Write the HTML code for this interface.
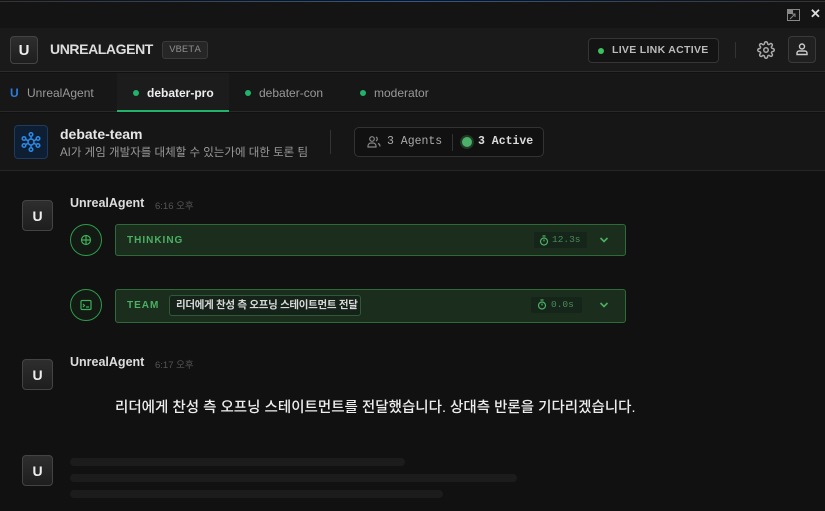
<!DOCTYPE html>
<html><head><meta charset="utf-8"><style>
*{box-sizing:border-box;margin:0;padding:0}
body{width:825px;height:511px;overflow:hidden;background:#111;font-family:"Liberation Sans","Noto Sans CJK KR",sans-serif;position:relative;color:#ddd}
.a{position:absolute;white-space:nowrap}
.mono{font-family:"Liberation Mono","Noto Sans CJK KR",monospace}
.av{position:absolute;width:31px;height:31px;border:1px solid #444;border-radius:4px;background:linear-gradient(#2e2e2e,#1e1e1e);color:#eee;font-weight:bold;font-size:14px;display:flex;align-items:center;justify-content:center}
.dot{position:absolute;width:6px;height:6px;border-radius:50%;background:#22b36a}
.gbox{position:absolute;left:115px;width:511px;background:#1b2e1d;border:1px solid #2f6b38;border-radius:3px}
.circ{position:absolute;width:32px;height:32px;border:1.5px solid #2f9a4a;border-radius:50%;background:#121a13;display:flex;align-items:center;justify-content:center}
</style></head><body>
<div class="a" style="left:0;top:0;width:825px;height:28px;background:#141414"></div>
<div class="a" style="left:0;top:1px;width:825px;height:1px;background:linear-gradient(90deg,#333,#2a5a9a 50%,#333)"></div>
<svg class="a" style="left:787px;top:9px" width="13" height="12"><rect x="0.5" y="0.5" width="12" height="11" fill="none" stroke="#888"/><rect x="1" y="1" width="5" height="4" fill="#888"/><path d="M3 10 L8 5 M5 5h3v3" stroke="#888" fill="none"/></svg>
<div class="a" style="left:810px;top:6px;font-size:13px;color:#ddd;font-weight:bold">✕</div>

<div class="a" style="left:0;top:28px;width:825px;height:44px;background:#1a1a1a;border-bottom:1px solid #2c2c2c"></div>
<div class="av" style="left:10px;top:36px;width:28px;height:28px;font-size:15px">U</div>
<div class="a" style="left:50px;top:41px;font-size:14px;font-weight:bold;color:#ddd;letter-spacing:-0.4px">UNREALAGENT</div>
<div class="a mono" style="left:162px;top:41px;width:46px;height:18px;border:1px solid #3a3a3a;background:#262626;border-radius:3px;font-size:10.5px;color:#888;text-align:center;line-height:16px">VBETA</div>
<div class="a" style="left:588px;top:38px;width:131px;height:25px;border:1px solid #353535;background:#141414;border-radius:4px"></div>
<div class="dot" style="left:598px;top:48px;background:#3cc060"></div>
<div class="a" style="left:612px;top:44px;font-size:10.5px;font-weight:bold;color:#bbb;letter-spacing:.3px">LIVE LINK ACTIVE</div>
<div class="a" style="left:735px;top:42px;width:1px;height:16px;background:#333"></div>
<svg class="a" style="left:757px;top:41px" width="18" height="18" viewBox="0 0 24 24" fill="none" stroke="#aaa" stroke-width="2"><circle cx="12" cy="12" r="3"/><path d="M19.4 15a1.7 1.7 0 0 0 .3 1.8l.1.1a2 2 0 1 1-2.8 2.8l-.1-.1a1.7 1.7 0 0 0-1.8-.3 1.7 1.7 0 0 0-1 1.5V21a2 2 0 1 1-4 0v-.1a1.7 1.7 0 0 0-1.1-1.5 1.7 1.7 0 0 0-1.800.3l-.1.1a2 2 0 1 1-2.8-2.8l.1-.1a1.7 1.7 0 0 0 .3-1.8 1.7 1.7 0 0 0-1.5-1H3a2 2 0 1 1 0-4h.1a1.7 1.7 0 0 0 1.5-1.1 1.7 1.7 0 0 0-.3-1.8l-.1-.1a2 2 0 1 1 2.8-2.8l.1.1a1.7 1.7 0 0 0 1.8.3H9a1.7 1.7 0 0 0 1-1.5V3a2 2 0 1 1 4 0v.1a1.7 1.7 0 0 0 1 1.5 1.7 1.7 0 0 0 1.8-.3l.1-.1a2 2 0 1 1 2.8 2.8l-.1.1a1.7 1.7 0 0 0-.3 1.8V9a1.7 1.7 0 0 0 1.5 1H21a2 2 0 1 1 0 4h-.1a1.7 1.7 0 0 0-1.5 1z"/></svg>
<div class="a" style="left:788px;top:36px;width:28px;height:27px;border:1px solid #3a3a3a;border-radius:4px;background:#202020"></div>
<svg class="a" style="left:795px;top:42px" width="14" height="14" viewBox="0 0 14 14" fill="none" stroke="#ccc" stroke-width="1.4"><circle cx="7" cy="4.5" r="2.5"/><path d="M2 12.5v-1.5a2 2 0 0 1 2-2h6a2 2 0 0 1 2 2v1.5z"/></svg>

<div class="a" style="left:0;top:73px;width:825px;height:39px;background:#171717;border-bottom:1px solid #2a2a2a"></div>
<div class="a" style="left:10px;top:86px;font-size:12px;font-weight:bold;color:#2a7de0">U</div>
<div class="a" style="left:27px;top:86px;font-size:12px;color:#999">UnrealAgent</div>
<div class="a" style="left:117px;top:73px;width:112px;height:39px;background:#1c1c1c;border-bottom:2px solid #22b36a"></div>
<div class="dot" style="left:133px;top:90px"></div>
<div class="a" style="left:147px;top:86px;font-size:12px;font-weight:bold;color:#eee">debater-pro</div>
<div class="dot" style="left:245px;top:90px"></div>
<div class="a" style="left:259px;top:86px;font-size:12px;color:#999">debater-con</div>
<div class="dot" style="left:360px;top:90px"></div>
<div class="a" style="left:374px;top:86px;font-size:12px;color:#999">moderator</div>

<div class="a" style="left:0;top:113px;width:825px;height:58px;background:#161616;border-bottom:1px solid #262626"></div>
<div class="a" style="left:14px;top:125px;width:34px;height:34px;border:1px solid #1f3a5c;background:#0f1f33;border-radius:4px"></div>
<svg class="a" style="left:21px;top:132px" width="20" height="20" viewBox="0 0 20 20" fill="none" stroke="#2a8ae8" stroke-width="1.5"><circle cx="10" cy="10" r="3"/><circle cx="10" cy="2.5" r="1.8"/><circle cx="10" cy="17.5" r="1.8"/><circle cx="3" cy="6.5" r="1.8"/><circle cx="17" cy="6.5" r="1.8"/><circle cx="3" cy="13.5" r="1.8"/><circle cx="17" cy="13.5" r="1.8"/><path d="M10 4.3V7M10 13v2.7M4.6 7.4 7.4 8.8M15.4 7.4 12.6 8.8M4.6 12.6 7.4 11.2M15.4 12.6 12.6 11.2"/></svg>
<div class="a" style="left:60px;top:126px;font-size:14px;font-weight:bold;color:#e6e6e6">debate-team</div>
<div class="a" style="left:60px;top:144px;font-size:11.5px;color:#999">AI가 게임 개발자를 대체할 수 있는가에 대한 토론 팀</div>
<div class="a" style="left:330px;top:130px;width:1px;height:24px;background:#333"></div>
<div class="a" style="left:354px;top:127px;width:190px;height:30px;border:1px solid #333;border-radius:5px;background:#111"></div>
<svg class="a" style="left:367px;top:135px" width="14" height="13" viewBox="0 0 14 13" fill="none" stroke="#888" stroke-width="1.2"><circle cx="5" cy="4" r="2.3"/><path d="M1 12v-1a3 3 0 0 1 3-3h2a3 3 0 0 1 3 3v1z"/><path d="M9 2a2.2 2.2 0 0 1 0 4M11 8.5a3 3 0 0 1 2 3"/></svg>
<div class="a mono" style="left:387px;top:135px;font-size:11.5px;color:#aaa">3 Agents</div>
<div class="a" style="left:452px;top:134px;width:1px;height:17px;background:#333"></div>
<div class="a" style="left:462px;top:137px;width:10px;height:10px;border-radius:50%;background:#4caf6a;box-shadow:0 0 0 2px #1f3a25"></div>
<div class="a mono" style="left:478px;top:135px;font-size:11.5px;font-weight:bold;color:#ddd">3 Active</div>

<div class="av" style="left:22px;top:200px">U</div>
<div class="a" style="left:70px;top:196px;font-size:12.5px;font-weight:bold;color:#ddd">UnrealAgent</div>
<div class="a" style="left:155px;top:198px;font-size:9.5px;color:#555">6:16 오후</div>
<div class="circ" style="left:70px;top:224px"><svg width="12" height="12" viewBox="0 0 12 12" fill="none" stroke="#3fae5a" stroke-width="1.2"><circle cx="6" cy="6" r="4.5"/><path d="M6 1.5v9M1.5 6h9"/></svg></div>
<div class="gbox" style="top:224px;height:32px"></div>
<div class="a" style="left:127px;top:235px;font-size:10px;font-weight:bold;color:#4caf62;letter-spacing:1px">THINKING</div>
<div class="a mono" style="left:534px;top:232px;width:53px;height:16px;background:#15251a;border-radius:2px;font-size:9.5px;color:#4a8a58;line-height:16px;padding-left:18px">12.3s</div>
<svg class="a" style="left:539px;top:235px" width="10" height="11" viewBox="0 0 10 11" fill="none" stroke="#4caf62" stroke-width="1.2"><circle cx="5" cy="6.5" r="3.5"/><path d="M3.5 1h3M5 6.5V4.5"/></svg>
<svg class="a" style="left:599px;top:236px" width="10" height="8" viewBox="0 0 10 8" fill="none" stroke="#4caf62" stroke-width="1.6"><path d="M1.5 2 5 5.5 8.5 2"/></svg>

<div class="circ" style="left:70px;top:289px"><svg width="12" height="12" viewBox="0 0 12 12" fill="none" stroke="#3fae5a" stroke-width="1.2"><rect x="1" y="1.5" width="10" height="9" rx="1"/><path d="M3 5l1.5 1.5L3 8M6 8h3"/></svg></div>
<div class="gbox" style="top:289px;height:34px"></div>
<div class="a" style="left:127px;top:300px;font-size:10px;font-weight:bold;color:#4caf62;letter-spacing:1px">TEAM</div>
<div class="a" style="left:169px;top:295px;width:192px;height:21px;border:1px solid #2f5a36;background:#14221a;border-radius:3px;font-size:10.5px;font-weight:bold;color:#d8d8d8;line-height:19px;padding-left:6px;letter-spacing:-0.3px">리더에게 찬성 측 오프닝 스테이트먼트 전달</div>
<div class="a mono" style="left:531px;top:297px;width:51px;height:16px;background:#15251a;border-radius:2px;font-size:9.5px;color:#4a8a58;line-height:16px;padding-left:20px">0.0s</div>
<svg class="a" style="left:537px;top:299px" width="10" height="11" viewBox="0 0 10 11" fill="none" stroke="#4caf62" stroke-width="1.2"><circle cx="5" cy="6.5" r="3.5"/><path d="M3.5 1h3M5 6.5V4.5"/></svg>
<svg class="a" style="left:599px;top:301px" width="10" height="8" viewBox="0 0 10 8" fill="none" stroke="#4caf62" stroke-width="1.6"><path d="M1.5 2 5 5.5 8.5 2"/></svg>

<div class="av" style="left:22px;top:359px">U</div>
<div class="a" style="left:70px;top:355px;font-size:12.5px;font-weight:bold;color:#ddd">UnrealAgent</div>
<div class="a" style="left:155px;top:357px;font-size:9.5px;color:#555">6:17 오후</div>
<div class="a" style="left:115px;top:396px;font-size:14.5px;font-weight:500;color:#eee">리더에게 찬성 측 오프닝 스테이트먼트를 전달했습니다. 상대측 반론을 기다리겠습니다.</div>

<div class="av" style="left:22px;top:455px">U</div>
<div class="a" style="left:70px;top:458px;width:335px;height:8px;border-radius:4px;background:#1c1c1c"></div>
<div class="a" style="left:70px;top:474px;width:447px;height:8px;border-radius:4px;background:#1c1c1c"></div>
<div class="a" style="left:70px;top:490px;width:373px;height:8px;border-radius:4px;background:#1c1c1c"></div>
</body></html>
